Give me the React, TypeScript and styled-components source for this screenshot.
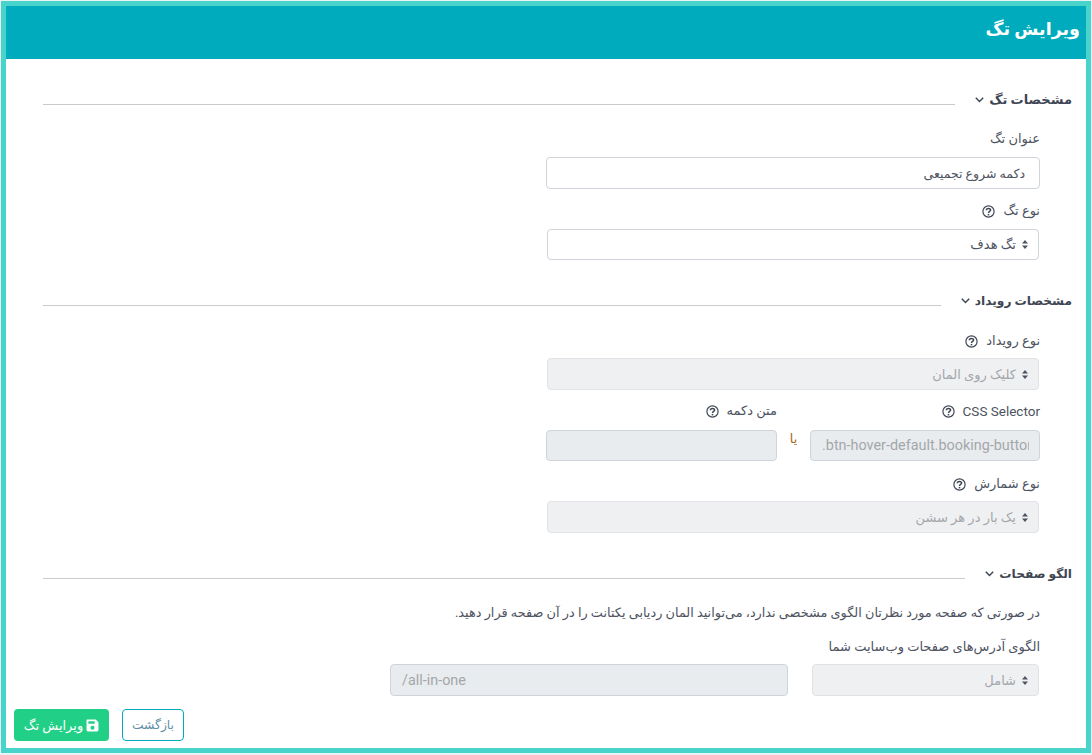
import React from "react";
import styled, { createGlobalStyle } from "styled-components";

const Global = createGlobalStyle`
  html, body { margin: 0; padding: 0; background: #e9f3f3; }
  body { font-family: Roboto, "DejaVu Sans", sans-serif; }
  * { box-sizing: border-box; }
`;

const Frame = styled.div`
  width: 1090px;
  height: 752px;
  margin: 1px 1px 2px 1px;
  border: 5px solid #48d3cb;
  background: #fff;
  direction: rtl;
  display: flex;
  flex-direction: column;
  overflow: hidden;
`;

const Header = styled.header`
  height: 53px;
  flex: none;
  background: #00abbd;
  color: #fff;
  padding: 0 6px;
  display: flex;
  align-items: center;
`;

const Title = styled.h1`
  margin: 0 0 8px;
  font-size: 17.5px;
  font-weight: 700;
  line-height: 24px;
`;

const Body = styled.main`
  flex: 1;
  padding: 31px 14px 0 37px;
  position: relative;
`;

const SectionHead = styled.div<{ $top?: number }>`
  display: flex;
  align-items: flex-end;
  height: 20px;
  margin-top: ${(p) => p.$top ?? 0}px;
`;

const SectionTitle = styled.h2<{ $size?: number }>`
  margin: 0;
  font-size: ${(p) => p.$size ?? 13}px;
  font-weight: 700;
  line-height: 20px;
  color: #3f4654;
  white-space: nowrap;
  display: flex;
  align-items: center;
  gap: 5px;
`;

const Rule = styled.div`
  flex: 1;
  height: 1px;
  background: #c9cacc;
  margin: 0 20px 5px 0;
`;

const Form = styled.div<{ $width?: number }>`
  width: ${(p) => p.$width ?? 494}px;
  margin-right: 32px;
`;

const Label = styled.label<{ $top: number }>`
  display: flex;
  align-items: center;
  gap: 8px;
  height: 18px;
  margin-top: ${(p) => p.$top}px;
  font-size: 13px;
  color: #4d5361;
  line-height: 18px;
  white-space: nowrap;
`;

const Latin = styled.span`
  direction: ltr;
  font-size: 13.5px;
`;

const TextField = styled.input<{ $top?: number; $latin?: boolean; $height?: number }>`
  display: block;
  width: 100%;
  height: ${(p) => p.$height ?? 32}px;
  margin-top: ${(p) => p.$top ?? 9}px;
  padding: ${(p) => (p.$latin ? "0 10px 0 11px" : "0 14px")};
  border: 1px solid #ced4da;
  border-radius: 4px;
  background: #fff;
  font-family: Roboto, "DejaVu Sans", sans-serif;
  font-size: ${(p) => (p.$latin ? 14.4 : 12.5)}px;
  color: #4d5361;
  direction: ${(p) => (p.$latin ? "ltr" : "rtl")};
  outline: none;
  &:disabled {
    background: #e9ecef;
    color: #a4a7aa;
    opacity: 1;
  }
`;

const Select = styled.div<{ $disabled?: boolean; $width?: string; $top?: number; $height?: number }>`
  width: ${(p) => p.$width ?? "492px"};
  height: ${(p) => p.$height ?? 32}px;
  margin: ${(p) => p.$top ?? 9}px 1px 0 0;
  padding: 0 10px 0 0;
  border: 1px solid ${(p) => (p.$disabled ? "#e0e2e6" : "#ced4da")};
  border-radius: 4px;
  background: ${(p) => (p.$disabled ? "#eff0f2" : "#fff")};
  color: ${(p) => (p.$disabled ? "#a4a7aa" : "#4d5361")};
  font-size: 13px;
  display: flex;
  align-items: center;
  gap: 6px;
`;

const TwoCols = styled.div`
  display: flex;
  align-items: flex-start;
`;

const Column = styled.div<{ $width: number; $start?: number }>`
  width: ${(p) => p.$width}px;
  flex: none;
  margin-right: ${(p) => p.$start ?? 0}px;
`;

const Or = styled.span`
  flex: 1;
  padding-top: 40px;
  text-align: center;
  font-size: 12.5px;
  color: #a5650e;
  line-height: 18px;
`;

const Help = styled.p`
  margin: 20px 0 0;
  font-size: 12.85px;
  line-height: 18px;
  color: #4d5361;
  white-space: nowrap;
`;

const Actions = styled.div`
  position: absolute;
  left: 8px;
  top: 650px;
  display: flex;
  gap: 13px;
  direction: ltr;
`;

const Primary = styled.button`
  width: 95px;
  height: 32px;
  border: 0;
  border-radius: 4px;
  background: #22cf86;
  color: #fff;
  font: 13px Roboto, "DejaVu Sans", sans-serif;
  direction: rtl;
  display: flex;
  align-items: center;
  justify-content: center;
  gap: 3px;
  padding: 0;
`;

const Outline = styled.button`
  width: 62px;
  height: 32px;
  border: 1px solid #00abbd;
  border-radius: 4px;
  background: #fff;
  color: #5f8fa8;
  font: 12.3px Roboto, "DejaVu Sans", sans-serif;
  direction: rtl;
  padding: 0;
`;

const Chevron = () => (
  <svg width="9" height="6" viewBox="0 0 9 6" fill="none" stroke="#3f4654" strokeWidth="1.5">
    <path d="M.8 .8 4.5 4.5 8.2 .8" />
  </svg>
);

const Sort = () => (
  <svg width="6" height="9" viewBox="0 0 6 9" fill="#4d5361" style={{ flex: "none" }}>
    <path d="M3 0 6 3.6H0zM3 9 0 5.4H6z" />
  </svg>
);

const Q = () => (
  <svg width="13" height="13" viewBox="0 0 13 13" fill="none" stroke="#3f4654">
    <circle cx="6.5" cy="6.5" r="5.6" strokeWidth="1.2" />
    <path d="M4.3 5.2C4.4 2.8 8.6 2.8 8.6 5.1 8.6 6.5 6.5 6.4 6.5 8" strokeWidth="1.5" />
    <path d="M6.5 8.9v1.5" strokeWidth="1.6" />
  </svg>
);

const Save = () => (
  <svg width="13" height="13" viewBox="0 0 12 12">
    <path fill="#fff" fillRule="evenodd" d="M1.3 0.5H9L11.5 3V10.2C11.5 10.9 10.9 11.5 10.2 11.5H1.8C1.1 11.5 .5 10.9 .5 10.2V1.3C.5 .9 .9 .5 1.3 .5ZM2.2 2V4.4H8V2ZM6 6.2A1.9 1.9 0 1 0 6 10 1.9 1.9 0 1 0 6 6.2Z" />
  </svg>
);

export default function App() {
  return (
    <>
      <Global />
      <Frame>
        <Header>
          <Title>ویرایش تگ</Title>
        </Header>
        <Body>
          <SectionHead>
            <SectionTitle>مشخصات تگ <Chevron /></SectionTitle>
            <Rule />
          </SectionHead>
          <Form>
            <Label $top={20}>عنوان تگ</Label>
            <TextField defaultValue="دکمه شروع تجمیعی" />
            <Label $top={13}>نوع تگ <Q /></Label>
            <Select $height={31}>
              <Sort /> تگ هدف
            </Select>
          </Form>

          <SectionHead $top={31}>
            <SectionTitle $size={12.2}>مشخصات رویداد <Chevron /></SectionTitle>
            <Rule />
          </SectionHead>
          <Form>
            <Label $top={21}>نوع رویداد <Q /></Label>
            <Select $disabled $top={8}>
              <Sort /> کلیک روی المان
            </Select>
            <TwoCols>
              <Column $width={230}>
                <Label $top={12}><Latin>CSS Selector</Latin> <Q /></Label>
                <TextField disabled $latin $top={10} $height={31} defaultValue=".btn-hover-default.booking-button" />
              </Column>
              <Or>یا</Or>
              <Column $width={231}>
                <Label $top={12}>متن دکمه <Q /></Label>
                <TextField disabled $top={10} $height={31} />
              </Column>
            </TwoCols>
            <Label $top={14}>نوع شمارش <Q /></Label>
            <Select $disabled $top={8}>
              <Sort /> یک بار در هر سشن
            </Select>
          </Form>

          <SectionHead $top={31}>
            <SectionTitle $size={12.2}>الگو صفحات <Chevron /></SectionTitle>
            <Rule />
          </SectionHead>
          <Form $width={650}>
            <Help>در صورتی که صفحه مورد نظرتان الگوی مشخصی ندارد، می‌توانید المان ردیابی یکتانت را در آن صفحه قرار دهید.</Help>
            <Label $top={16}>الگوی آدرس‌های صفحات وب‌سایت شما</Label>
            <TwoCols>
              <Select $disabled $width="227px" $top={8}>
                <Sort /> شامل
              </Select>
              <Column $width={398} $start={24}>
                <TextField disabled $latin $top={8} defaultValue="/all-in-one" />
              </Column>
            </TwoCols>
          </Form>
          <Actions>
            <Primary><Save /> ویرایش تگ</Primary>
            <Outline>بازگشت</Outline>
          </Actions>
        </Body>
      </Frame>
    </>
  );
}
